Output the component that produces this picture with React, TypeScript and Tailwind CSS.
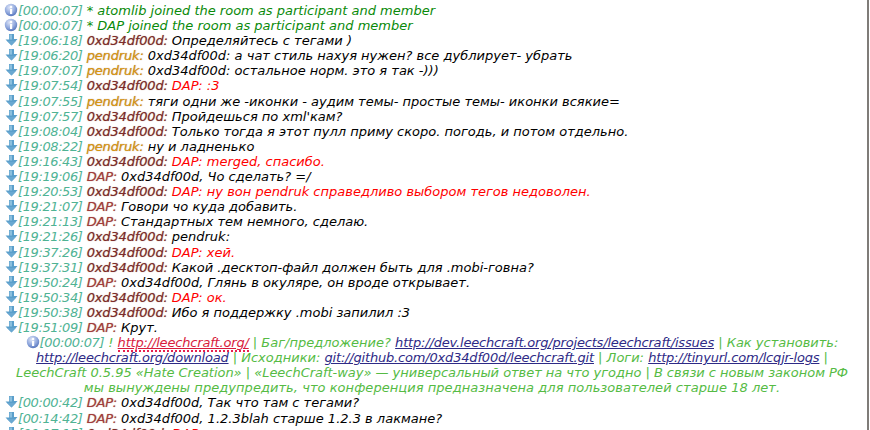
import React from "react";

type Row = { time: string; icon?: "info" | "msg"; nick?: "dark" | "gold" | "dap"; name?: string; text?: string; red?: boolean; green?: boolean };

const ME = "0xd34df00d";

const rows: Row[] = [
  { time: "00:00:07", icon: "info", green: true, text: "* atomlib joined the room as participant and member" },
  { time: "00:00:07", icon: "info", green: true, text: "* DAP joined the room as participant and member" },
  { time: "19:06:18", nick: "dark", name: ME, text: "Определяйтесь с тегами )" },
  { time: "19:06:20", nick: "gold", name: "pendruk", text: "0xd34df00d: а чат стиль нахуя нужен? все дублирует- убрать" },
  { time: "19:07:07", nick: "gold", name: "pendruk", text: "0xd34df00d: остальное норм. это я так -)))" },
  { time: "19:07:54", nick: "dark", name: ME, red: true, text: "DAP: :3" },
  { time: "19:07:55", nick: "gold", name: "pendruk", text: "тяги одни же -иконки - аудим темы- простые темы- иконки всякие=" },
  { time: "19:07:57", nick: "dark", name: ME, text: "Пройдешься по xml'кам?" },
  { time: "19:08:04", nick: "dark", name: ME, text: "Только тогда я этот пулл приму скоро. погодь, и потом отдельно." },
  { time: "19:08:22", nick: "gold", name: "pendruk", text: "ну и ладненько" },
  { time: "19:16:43", nick: "dark", name: ME, red: true, text: "DAP: merged, спасибо." },
  { time: "19:19:06", nick: "dap", name: "DAP", text: "0xd34df00d, Чо сделать? =/" },
  { time: "19:20:53", nick: "dark", name: ME, red: true, text: "DAP: ну вон pendruk справедливо выбором тегов недоволен." },
  { time: "19:21:07", nick: "dap", name: "DAP", text: "Говори чо куда добавить." },
  { time: "19:21:13", nick: "dap", name: "DAP", text: "Стандартных тем немного, сделаю." },
  { time: "19:21:26", nick: "dark", name: ME, text: "pendruk:" },
  { time: "19:37:26", nick: "dark", name: ME, red: true, text: "DAP: хей." },
  { time: "19:37:31", nick: "dark", name: ME, text: "Какой .десктоп-файл должен быть для .mobi-говна?" },
  { time: "19:50:24", nick: "dap", name: "DAP", text: "0xd34df00d, Глянь в окуляре, он вроде открывает." },
  { time: "19:50:34", nick: "dark", name: ME, red: true, text: "DAP: ок." },
  { time: "19:50:38", nick: "dark", name: ME, text: "Ибо я поддержку .mobi запилил :3" },
  { time: "19:51:09", nick: "dap", name: "DAP", text: "Крут." },
];

const after: Row[] = [
  { time: "00:00:42", nick: "dap", name: "DAP", text: "0xd34df00d, Так что там с тегами?" },
  { time: "00:14:42", nick: "dap", name: "DAP", text: "0xd34df00d, 1.2.3blah старше 1.2.3 в лакмане?" },
  { time: "00:17:15", nick: "dark", name: ME, red: true, text: "DAP: нуу" },
];

const nickClass = {
  dark: "text-[#7d2a2a]",
  gold: "text-[#d9960f]",
  dap: "text-[#a33c3c]",
};

const InfoIcon = () => (
  <svg width="14" height="14" viewBox="0 0 14 14" className="inline-block shrink-0 align-top">
    <defs>
      <radialGradient id="infoBall" cx="40%" cy="30%" r="75%">
        <stop offset="0" stopColor="#dfe6f8" />
        <stop offset="0.6" stopColor="#8ea6dc" />
        <stop offset="1" stopColor="#4f6fb8" />
      </radialGradient>
    </defs>
    <circle cx="7" cy="7" r="6.2" fill="url(#infoBall)" />
    <rect x="6" y="6" width="2.2" height="5" fill="#fff" />
    <circle cx="7.1" cy="4" r="1.2" fill="#fff" />
  </svg>
);

const MsgIcon = () => (
  <svg width="14" height="14" viewBox="0 0 14 14" className="inline-block shrink-0 align-top">
    <path d="M5 1h5v5h3.5L9 11 7.5 12.5 1.5 6.5H5z" fill="#5b9fcb" />
    <path d="M5.5 1.5h2.5v5H5.5z" fill="#8cc0de" />
    <path d="M3 8h9l-4.5 4.5z" fill="#6fadd3" opacity="0.7" />
  </svg>
);

const Line = ({ r }: { r: Row }) => (
  <div className="whitespace-nowrap pl-[4px]">
    {r.icon === "info" ? <InfoIcon /> : <MsgIcon />}
    <span className="tracking-[-0.4px] text-[#4fb394]">[{r.time}]</span>{" "}
    {r.name && (
      <span className={`${nickClass[r.nick!]} tracking-[-0.15px] [text-shadow:0_0_1px_rgba(120,60,20,0.6)]`}>{r.name}: </span>
    )}
    <span className={r.red ? "text-[#ff0000]" : r.green ? "text-[#0a8a0a]" : "text-black"}>{r.text}</span>
  </div>
);

const Link = ({ children }: { children: React.ReactNode }) => (
  <span className="text-[#2e2a86] underline tracking-[-0.18px]">{children}</span>
);

export default function App() {
  return (
    <div className="h-[430px] w-[870px] overflow-hidden bg-white">
      <div className="h-full w-[869px] overflow-hidden border-r-2 border-[#7f7c78] pt-[3px] font-['DejaVu_Sans',sans-serif] text-[13px] italic leading-[15.1px]">
        {rows.map((r, i) => (
          <Line key={i} r={r} />
        ))}
        <div className="pl-[14px] pr-[17px] text-center text-[#55bb44]">
          <InfoIcon />
          <span className="tracking-[-0.4px] text-[#4fb394]">[00:00:07]</span> !{" "}
          <span className="border-b-2 border-dotted border-[#e8204f] text-[#d81b3c] underline tracking-[-0.18px]">http://leechcraft.org/</span> | Баг/предложение?{" "}
          <Link>http://dev.leechcraft.org/projects/leechcraft/issues</Link> | Как установить:
          <br />
          <Link>http://leechcraft.org/download</Link> | Исходники: <Link>git://github.com/0xd34df00d/leechcraft.git</Link> | Логи:{" "}
          <Link>http://tinyurl.com/lcqjr-logs</Link> |
          <br />
          <span className="tracking-[-0.03px]">LeechCraft 0.5.95 «Hate Creation» | «LeechCraft-way» — универсальный ответ на что угодно | В связи с новым законом РФ</span>
          <br />
          <span className="tracking-[0.05px]">мы вынуждены предупредить, что конференция предназначена для пользователей старше 18 лет.</span>
        </div>
        {after.map((r, i) => (
          <Line key={i} r={r} />
        ))}
      </div>
    </div>
  );
}
